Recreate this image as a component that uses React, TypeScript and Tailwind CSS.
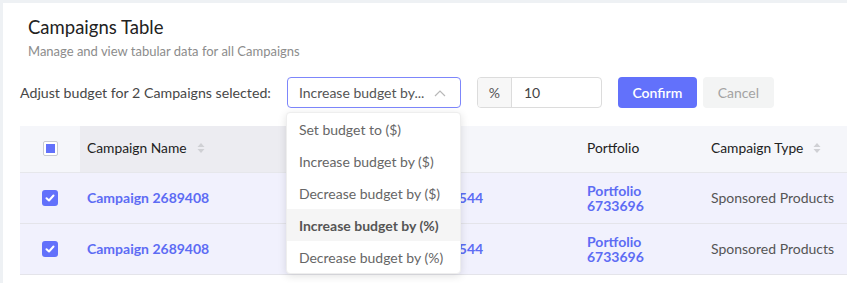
import React from 'react';

const options = [
  'Set budget to ($)',
  'Increase budget by ($)',
  'Decrease budget by ($)',
  'Increase budget by (%)',
  'Decrease budget by (%)',
];

const rows = [
  { name: 'Campaign 2689408', group: 'Ad Group 3251544', portfolio: 'Portfolio 6733696', type: 'Sponsored Products' },
  { name: 'Campaign 2689408', group: 'Ad Group 3251544', portfolio: 'Portfolio 6733696', type: 'Sponsored Products' },
];

function SortIcon() {
  return (
    <svg width="8" height="12" viewBox="0 0 8 12" className="ml-[10px] inline-block align-[-1px]">
      <path d="M4 1 L7.5 5 H0.5 Z" fill="#cfd0d4" />
      <path d="M4 11 L7.5 7 H0.5 Z" fill="#cfd0d4" />
    </svg>
  );
}

function CheckBox({ checked }: { checked: boolean }) {
  if (!checked) {
    return (
      <div className="w-[15px] h-[15px] rounded-[2px] border border-[#c9cbd1] bg-white flex items-center justify-center">
        <div className="w-[9px] h-[9px] bg-[#6271fb]" />
      </div>
    );
  }
  return (
    <div className="w-4 h-4 rounded-[3px] bg-[#6271fb] flex items-center justify-center">
      <svg width="10" height="8" viewBox="0 0 10 8">
        <path d="M1.5 4.2 L4 6.5 L8.5 1.5" stroke="white" strokeWidth="2" fill="none" strokeLinecap="round" strokeLinejoin="round" />
      </svg>
    </div>
  );
}

export default function App() {
  return (
    <div className="w-[847px] h-[283px] overflow-hidden bg-[#eef1f4] pt-[3px] pl-[3px] font-['Lato',sans-serif]">
      <div className="relative bg-white h-full w-[900px] pt-[13px]">
        <div className="pl-[25px]">
          <h1 className="text-[18.5px] leading-[22px] text-[#222]">Campaigns Table</h1>
          <p className="mt-[5px] text-[13px] leading-[16px] text-[#8c8c8c]">Manage and view tabular data for all Campaigns</p>
        </div>

        <div className="flex items-center pl-[17px] mt-[18px] h-[31px]">
          <span className="text-[14.2px] text-[#474747]">Adjust budget for 2 Campaigns selected:</span>
          <div className="relative ml-[16px]">
            <div className="w-[174px] h-[31px] rounded-[4px] border border-[#7d86fb] flex items-center justify-between pl-[11px] pr-[14px]">
              <span className="text-[14px] text-[#555] truncate">Increase budget by...</span>
              <svg width="12" height="8" viewBox="0 0 12 8" className="shrink-0 ml-2">
                <path d="M1 7 L6 2 L11 7" stroke="#b8b8b8" strokeWidth="1.2" fill="none" />
              </svg>
            </div>
            <div className="absolute z-10 left-[-1px] top-[35px] w-[175px] bg-white rounded-[4px] shadow-[0_2px_8px_rgba(0,0,0,0.12)] border border-[#eee]">
              {options.map((o, i) => (
                <div
                  key={o}
                  className={`h-[32px] flex items-center pl-[12px] text-[14px] ${i === 3 ? 'bg-[#f5f5f5] font-bold text-[#555]' : 'text-[#666]'}`}
                >
                  {o}
                </div>
              ))}
            </div>
          </div>
          <div className="ml-[16px] flex h-[31px] w-[125px] rounded-[4px] border border-[#dcdcdc] overflow-hidden">
            <div className="w-[34px] bg-[#f7f7f7] border-r border-[#dcdcdc] flex items-center justify-center text-[14px] text-[#555]">%</div>
            <div className="flex items-center pl-[12px] text-[14px] text-[#444]">10</div>
          </div>
          <button className="ml-[16px] h-[31px] w-[79px] rounded-[4px] bg-[#6271fb] text-white text-[14px] font-semibold">Confirm</button>
          <button className="ml-[6px] h-[31px] w-[71px] rounded-[4px] bg-[#f3f4f4] text-[#a3a3a3] text-[14px]">Cancel</button>
        </div>

        <div className="ml-[17px] mt-[18px]">
          <table className="table-fixed border-collapse w-[880px] text-[14px]">
            <colgroup>
              <col className="w-[60px]" />
              <col className="w-[275px]" />
              <col className="w-[224px]" />
              <col className="w-[124px]" />
              <col className="w-[197px]" />
            </colgroup>
            <thead>
              <tr className="h-[46px] bg-[#f5f6fa] border-b border-[#e6e7eb]">
                <th className="p-0">
                  <div className="flex justify-center"><CheckBox checked={false} /></div>
                </th>
                <th className="bg-[#ececf1] text-left font-normal text-[13.8px] text-[#222] pl-[7px]">
                  Campaign Name<SortIcon />
                </th>
                <th className="text-left font-normal text-[13.8px] text-[#222] pl-[8px]">Ad Group</th>
                <th className="text-left font-normal text-[13.8px] text-[#222] pl-[8px]">Portfolio</th>
                <th className="text-left font-normal text-[13.8px] text-[#222] pl-[8px]">
                  Campaign Type<SortIcon />
                </th>
              </tr>
            </thead>
            <tbody>
              {rows.map((r, i) => (
                <tr key={i} className="h-[51px] bg-[#f1f1fd] border-b border-[#e4e4ea]">
                  <td className="p-0">
                    <div className="flex justify-center"><CheckBox checked /></div>
                  </td>
                  <td className="pl-[7px] font-bold text-[#5d6cf4]">{r.name}</td>
                  <td className="pl-[8px] font-bold text-[#5d6cf4]">{r.group}</td>
                  <td className="pl-[8px] font-bold text-[#5d6cf4]">
                    <div className="w-[90px] leading-[15px]">{r.portfolio}</div>
                  </td>
                  <td className="pl-[8px] text-[#555]">{r.type}</td>
                </tr>
              ))}
            </tbody>
          </table>
        </div>
      </div>
    </div>
  );
}
